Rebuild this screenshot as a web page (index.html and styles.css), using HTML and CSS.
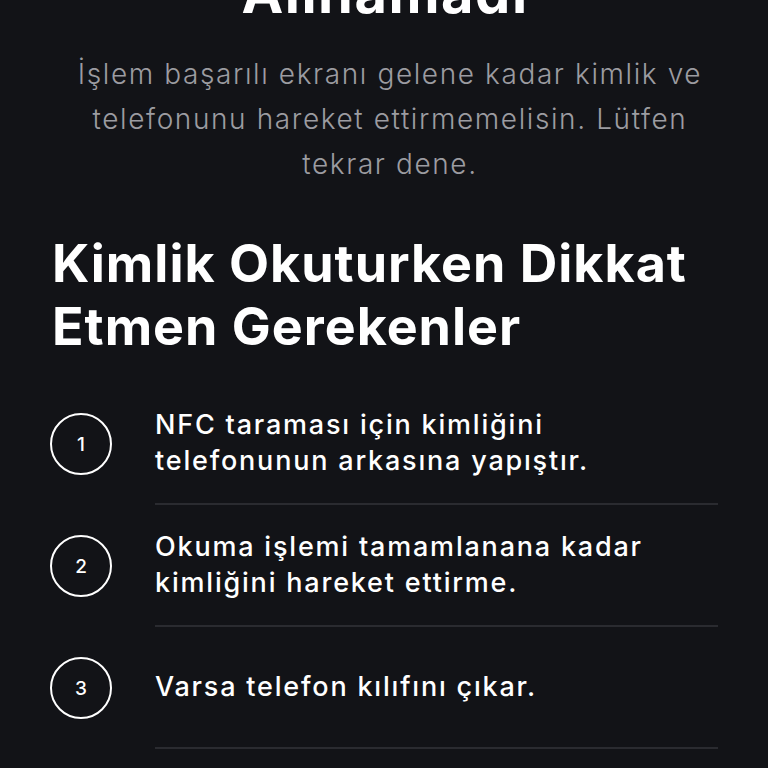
FILE: index.html
```html
<!DOCTYPE html>
<html lang="tr">
<head>
<meta charset="utf-8">
<link rel="stylesheet" href="styles.css">
</head>
<body>
<main class="page">
  <h1 class="title">Alınamadı</h1>
  <p class="lead">İşlem başarılı ekranı gelene kadar kimlik ve telefonunu hareket ettirmemelisin. Lütfen tekrar dene.</p>
  <h2 class="section-title">Kimlik Okuturken Dikkat Etmen Gerekenler</h2>
  <ol class="steps">
    <li class="step">
      <span class="badge">1</span>
      <div class="step-text">NFC taraması için kimliğini telefonunun arkasına yapıştır.</div>
    </li>
    <li class="step">
      <span class="badge">2</span>
      <div class="step-text">Okuma işlemi tamamlanana kadar kimliğini hareket ettirme.</div>
    </li>
    <li class="step">
      <span class="badge">3</span>
      <div class="step-text">Varsa telefon kılıfını çıkar.</div>
    </li>
  </ol>
</main>
</body>
</html>
```
FILE: styles.css
```css
html, body {
  margin: 0;
  padding: 0;
  background: #121317;
}
body {
  font-family: Inter, "Noto Sans", sans-serif;
  color: #ffffff;
  overflow: hidden;
}
.page {
  padding: 0 50px 0 52px;
}
.title {
  margin: -37px 0 0;
  font-size: 56px;
  line-height: 60px;
  font-weight: 700;
  text-align: center;
  letter-spacing: 1.5px;
}
.lead {
  margin: 29px 0 0;
  padding: 0 10px 0 20px;
  font-size: 28px;
  line-height: 45px;
  font-weight: 300;
  letter-spacing: 1.6px;
  color: #9c9ca1;
  text-align: center;
}
.section-title {
  margin: 45px 0 0;
  font-size: 52px;
  line-height: 63px;
  font-weight: 700;
  letter-spacing: 1px;
}
.steps {
  list-style: none;
  margin: 25px 0 0;
  padding: 0;
}
.step {
  display: grid;
  grid-template-columns: 62px 1fr;
  column-gap: 43px;
  align-items: center;
  margin-left: -2px;
}
.badge {
  box-sizing: border-box;
  width: 62px;
  height: 62px;
  border: 2px solid #ffffff;
  border-radius: 50%;
  display: flex;
  align-items: center;
  justify-content: center;
  font-size: 19px;
  font-weight: 500;
}
.step-text {
  min-height: 120px;
  display: flex;
  align-items: center;
  border-bottom: 2px solid #2a2b30;
  font-size: 27px;
  line-height: 36px;
  font-weight: 500;
  letter-spacing: 1.8px;
}
```
